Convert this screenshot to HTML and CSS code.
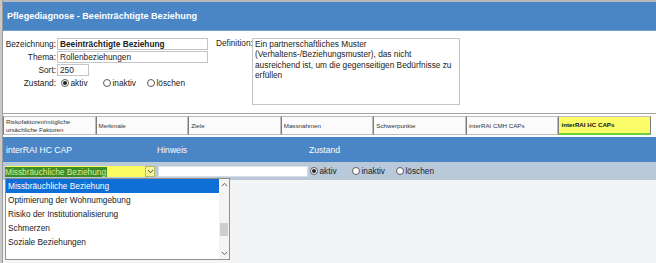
FILE: index.html
```html
<!DOCTYPE html>
<html lang="de">
<head>
<meta charset="utf-8">
<title>Pflegediagnose</title>
<link rel="stylesheet" href="styles.css">
</head>
<body>
<div class="app">
  <div class="edge"></div>
  <div class="main">
    <div class="titlebar">Pflegediagnose - Beeinträchtigte Beziehung</div>
    <div class="form">
      <div class="fields">
        <div class="row"><span class="lbl">Bezeichnung:</span><span class="input wide bold">Beeinträchtigte Beziehung</span></div>
        <div class="row"><span class="lbl">Thema:</span><span class="input wide">Rollenbeziehungen</span></div>
        <div class="row"><span class="lbl">Sort:</span><span class="input short">250</span></div>
        <div class="row"><span class="lbl">Zustand:</span>
          <span class="radios">
            <span class="radio w1"><span class="dot checked"></span>aktiv</span>
            <span class="radio w2"><span class="dot"></span>inaktiv</span>
            <span class="radio"><span class="dot"></span>löschen</span>
          </span>
        </div>
      </div>
      <div class="def">
        <span class="deflbl">Definition:</span>
        <div class="textarea">Ein partnerschaftliches Muster<br>(Verhaltens-/Beziehungsmuster), das nicht<br>ausreichend ist, um die gegenseitigen Bedürfnisse zu<br>erfüllen</div>
      </div>
    </div>
    <div class="tabs">
      <div class="tab">Riskofaktoren/mögliche<br>ursächliche Faktoren</div>
      <div class="tab">Merkmale</div>
      <div class="tab">Ziele</div>
      <div class="tab">Massnahmen</div>
      <div class="tab">Schwerpunkte</div>
      <div class="tab">interRAI CMH CAPs</div>
      <div class="tab active">interRAI HC CAPs</div>
    </div>
    <div class="band">
      <span>interRAI HC CAP</span>
      <span>Hinweis</span>
      <span>Zustand</span>
    </div>
    <div class="editrow">
      <div class="select">
        <span class="seltext">Missbräuchliche Beziehung</span>
        <span class="selbtn"><svg width="7" height="5" viewBox="0 0 7 5"><path d="M1 1 L3.5 3.8 L6 1" fill="none" stroke="#555" stroke-width="1"/></svg></span>
      </div>
      <span class="input hint"></span>
      <span class="radios">
        <span class="radio w1"><span class="dot checked"></span>aktiv</span>
        <span class="radio w2"><span class="dot"></span>inaktiv</span>
        <span class="radio"><span class="dot"></span>löschen</span>
      </span>
    </div>
    <div class="rest"></div>
    <div class="dropdown">
      <div class="items">
        <div class="item sel">Missbräuchliche Beziehung</div>
        <div class="item">Optimierung der Wohnumgebung</div>
        <div class="item">Risiko der Institutionalisierung</div>
        <div class="item">Schmerzen</div>
        <div class="item">Soziale Beziehungen</div>
      </div>
      <div class="scroll">
        <svg class="arr" width="7" height="5" viewBox="0 0 7 5"><path d="M1 4 L3.5 1.3 L6 4" fill="none" stroke="#666" stroke-width="1"/></svg>
        <div class="track"><div class="thumb"></div></div>
        <svg class="arr" width="7" height="5" viewBox="0 0 7 5"><path d="M1 1 L3.5 3.7 L6 1" fill="none" stroke="#666" stroke-width="1"/></svg>
      </div>
    </div>
  </div>
</div>
</body>
</html>
```
FILE: styles.css
```css
html, body {
  margin: 0;
  padding: 0;
}
body {
  width: 656px;
  height: 263px;
  overflow: hidden;
  font-family: "Liberation Sans", Arial, sans-serif;
  font-size: 8.3px;
  color: #222;
  background: #fff;
}
.app {
  display: flex;
  height: 263px;
}
.edge {
  width: 2px;
  background: #c9c9c9;
  border-right: 1px solid #9c9c9c;
}
.main {
  flex: 1;
  position: relative;
  display: flex;
  flex-direction: column;
  min-width: 0;
}
.titlebar {
  height: 28px;
  border-top: 2px solid #b6b9bd;
  background: #4a86c6;
  border-bottom: 1px solid #6f9fd2;
  color: #fff;
  font-weight: bold;
  font-size: 9.1px;
  padding-left: 4px;
  display: flex;
  align-items: center;
}
.form {
  height: 76px;
  padding-top: 6px;
  display: flex;
}
.fields {
  width: 207px;
}
.row {
  display: flex;
  align-items: center;
  height: 13px;
}
.lbl {
  width: 53px;
  text-align: right;
  padding-right: 1px;
}
.input {
  box-sizing: border-box;
  height: 12px;
  line-height: 10px;
  border: 1px solid #c4c4c4;
  background: #fff;
  padding: 0 2px;
  white-space: nowrap;
}
.wide { width: 151px; }
.short { width: 32px; }
.bold { font-weight: bold; }
.radios {
  display: flex;
  align-items: center;
  margin-left: 4px;
}
.radio {
  display: flex;
  align-items: center;
}
.radio.w1 { width: 42px; }
.radio.w2 { width: 44px; }
.dot {
  box-sizing: border-box;
  width: 8px;
  height: 8px;
  border: 1px solid #5a5a5a;
  border-radius: 50%;
  background: #fff;
  margin-right: 1.5px;
  display: flex;
  align-items: center;
  justify-content: center;
}
.dot.checked::after {
  content: "";
  width: 4px;
  height: 4px;
  border-radius: 50%;
  background: #222;
}
.def {
  display: flex;
  align-items: flex-start;
  margin-left: 6px;
}
.deflbl {
  width: 35px;
  text-align: right;
  line-height: 12px;
  margin-right: 1px;
}
.textarea {
  box-sizing: border-box;
  width: 208px;
  height: 67px;
  margin-top: 1px;
  border: 1px solid #c4c4c4;
  padding: 0 2px;
  line-height: 10.3px;
}
.tabs {
  height: 19px;
  border-top: 1px solid #a3a3a3;
  padding: 2px 5px 2px 0;
  display: flex;
}
.tab {
  flex: 1;
  box-sizing: border-box;
  border: 1px solid #bdbdbd;
  border-left: 1px solid #7d7d7d;
  background: #fbfbfb;
  font-size: 6.2px;
  color: #333;
  padding-left: 2px;
  display: flex;
  align-items: center;
  line-height: 7.5px;
}
.tab:last-child {
  border-right: 1px solid #7d7d7d;
}
.tab.active {
  background: #fdfd6a;
  border-bottom: 2px solid #6ccf3c;
  font-weight: bold;
  color: #111;
}
.band {
  height: 25px;
  background: #4a86c6;
  color: #fff;
  font-size: 8.6px;
  display: grid;
  grid-template-columns: 151px 152px auto;
  align-items: center;
  padding-left: 3px;
}
.editrow {
  height: 18px;
  background: #b9c9da;
  display: flex;
  align-items: center;
  padding-left: 2px;
}
.select {
  box-sizing: border-box;
  width: 150px;
  height: 11px;
  background: #fbfb62;
  display: flex;
  align-items: center;
  justify-content: space-between;
  margin-top: 1px;
}
.seltext {
  background: #3e8b2a;
  color: #d9f08a;
  line-height: 10px;
  padding-right: 1px;
}
.selbtn {
  box-sizing: border-box;
  width: 10px;
  height: 11px;
  border: 1px solid #b9b96a;
  background: #f4f49a;
  display: flex;
  align-items: center;
  justify-content: center;
}
.hint {
  width: 150px;
  height: 11px;
  margin-left: 3px;
  border-color: #d8dde3;
}
.editrow .radios {
  margin-left: 2px;
}
.rest {
  flex: 1;
  background: #f3f4f5;
}
.dropdown {
  position: absolute;
  left: 2px;
  top: 178px;
  box-sizing: border-box;
  width: 225px;
  height: 82px;
  background: #fff;
  border: 1px solid #8f8f8f;
  display: flex;
}
.items {
  flex: 1;
}
.item {
  height: 14px;
  line-height: 14px;
  padding-left: 2px;
  color: #222;
}
.item.sel {
  background: #0f6fd6;
  color: #fff;
}
.scroll {
  width: 10px;
  background: #f4f4f4;
  display: flex;
  flex-direction: column;
  align-items: center;
}
.arr {
  margin: 3px 0;
}
.track {
  flex: 1;
  width: 100%;
  position: relative;
}
.thumb {
  position: absolute;
  left: 1px;
  right: 1px;
  top: 33px;
  height: 13px;
  background: #cdcdcd;
}
```
